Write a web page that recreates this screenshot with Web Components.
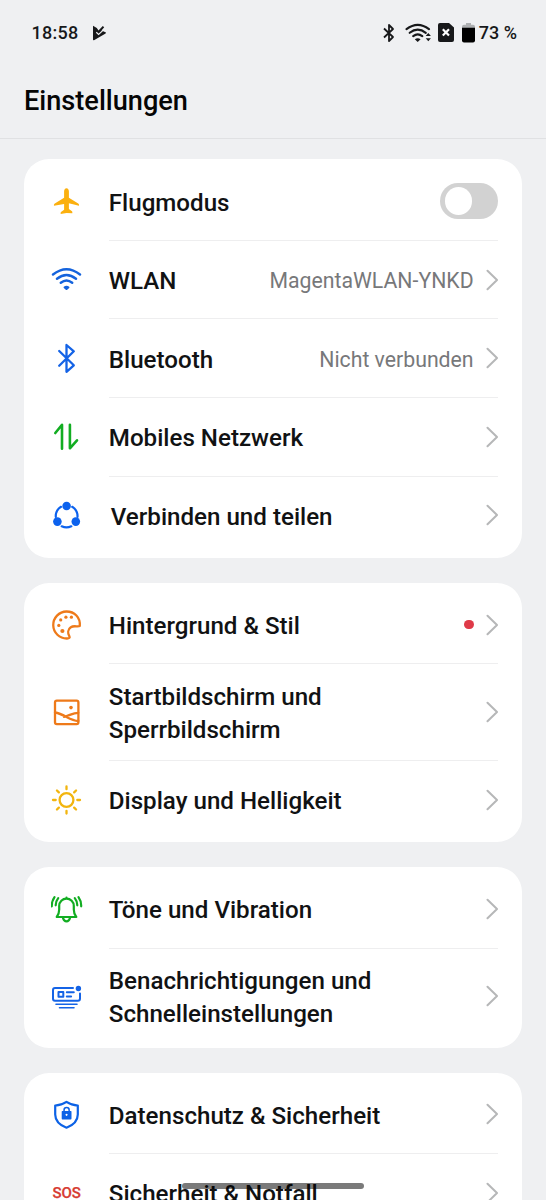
<!DOCTYPE html>
<html lang="de">
<head>
<meta charset="utf-8">
<title>Einstellungen</title>
<style>
html, body { margin: 0; height: 1200px; overflow: hidden; background: #eff0f2; }
</style>
</head>
<body>
<settings-screen></settings-screen>
<script>
const line = (c, w = 2) => `fill="none" stroke="${c}" stroke-width="${w}" stroke-linecap="round" stroke-linejoin="round"`;
const ICONS = {
  plane: `<path fill="#fbb00f" d="M16 2.2c1.5 0 2.4 1.6 2.4 3.4v6.2l9.3 5.6c.8.5 1 1.2.8 2.3l-10.1-2.4v5.6l3.1 2.4c.4.4.5 1.1.3 2L16 26.9l-5.8 1.2c-.2-.9-.1-1.6.3-2l3.1-2.4v-5.6L3.500 19.700c-.2-1.100 0-1.800.8-2.300l9.300-5.600V5.600c0-1.800.900-3.400 2.400-3.400z"/>`,
  wifi: `<g ${line('#1463dd', 2.4)}><path d="M2.500 10.500Q16-.200 29.500 10.500M6.500 14.800Q16 7.200 25.500 14.800M10.300 18.700Q16 14.200 21.700 18.700"/></g><path fill="#1463dd" d="M13.300 22.800q2.700-2.300 5.400 0 .5.600 0 1.100l-2 1.800q-.7.600-1.400 0l-2-1.800q-.5-.500 0-1.100z"/>`,
  bluetooth: `<path ${line('#1463e6', 2.3)} d="M8.700 8 23.300 22.300 16 28.800V2L23.300 8.300 8.700 22.800"/>`,
  data: `<path ${line('#12ad22', 2.6)} d="M4.800 12 11.500 3.800V27.800M19.400 3.800V27.300L26.500 19.300"/>`,
  share: `<path ${line('#0c62ee', 2.2)} d="M5.300 17A11.200 11.200 0 0 1 10.500 6.800M21.700 6.800A11.200 11.200 0 0 1 27 17M11.200 26.300A11.200 11.200 0 0 0 20.800 26.300"/><g fill="#0c62ee"><circle cx="16.100" cy="6" r="4.300"/><circle cx="6.900" cy="21.600" r="4.300"/><circle cx="25.300" cy="21.600" r="4.300"/></g>`,
  palette: `<path ${line('#ee7a1a', 2.3)} d="M29.300 17C30 8.500 24 2.500 16 2.500A13.500 13.500 0 0 0 16.500 29.500C19 29.400 19.700 28.500 18.800 27.200C17 24 17.300 20.300 20.300 18.300C23.500 16 26.800 18.200 29.300 17Z"/><g fill="#ee7a1a"><circle cx="20.900" cy="8.200" r="1.600"/><circle cx="15.400" cy="8.200" r="1.600"/><circle cx="10.200" cy="10.900" r="1.600"/><circle cx="8.300" cy="16.400" r="1.600"/><circle cx="11.900" cy="22" r="2.100"/></g>`,
  picture: `<g ${line('#ee7a1a', 2.3)}><rect x="4.500" y="3.700" width="23.400" height="23.400" rx="1.800"/><path d="M4.500 15.500C14 17 19 23.500 27.800 24M13.500 19.800C18.500 19 22 15.800 27.800 15.800"/></g><circle cx="20.500" cy="10.600" r="1.800" fill="#ee7a1a"/>`,
  sun: `<g ${line('#f2b50f', 2.3)}><circle cx="16" cy="16" r="6.900"/><path d="M16 2.500v2.700M16 26.800v2.700M2.500 16h2.700M26.800 16h2.700M6.450 6.450l1.900 1.900M23.650 23.650l1.900 1.900M6.450 25.550l1.900-1.900M23.650 8.350l1.900-1.900"/></g>`,
  bell: `<g ${line('#12ad22', 2.2)}><path d="M16 4.500v1.200M6.200 24H25.800C24 21.800 23.300 19.500 23.300 16.500V13A7.300 7.300 0 0 0 8.700 13V16.500C8.700 19.500 8 21.800 6.200 24ZM12.500 25q.8 3.300 3.500 3.300t3.500-3.300"/><path d="M4 4.100Q1.100 8.200 1.300 13.300M7.700 5.100Q5.200 8.300 5.200 12.300M28 4.100Q30.900 8.200 30.700 13.300M24.300 5.100Q26.800 8.300 26.800 12.300"/></g>`,
  panel: `<g ${line('#1463e6', 2)}><path d="M22.500 7H4.500Q2.500 7 2.500 9V17.500Q2.500 19.700 4.500 19.700H27.400Q29.500 19.700 29.500 17.500V12.500"/><rect x="8" y="11" width="4.800" height="4.800"/><path d="M16.300 11.300h7M16.300 15.500h4.300"/><path d="M5.500 23.200H26.500M9 26.700H23.500" stroke-width="1.600"/></g><circle cx="27.900" cy="7.500" r="2.700" fill="#1463e6"/>`,
  shield: `<path ${line('#0c62e6', 2.2)} d="M16 2.900Q21 6.300 27.300 6.600V15.500Q27.200 24.500 16 28.700Q4.800 24.500 4.700 15.500V6.600Q11 6.300 16 2.900Z"/><path fill="#0c62e6" fill-rule="evenodd" d="M11.200 12.600q0-.700.7-.700h.9v-.900a3.300 3.300 0 0 1 6.600 0v.900h.9q.7 0 .7.700v7q0 .900-.8.900h-8.200q-.8 0-.8-.900zM14.300 11.900h3.600v-.900a1.800 1.800 0 0 0-3.600 0zM16 14.800a1 1 0 1 0 .1 0z"/>`
};

const element = (name, render) => customElements.define(name, class extends HTMLElement {
  connectedCallback() {
    if (this.shadowRoot) return;
    this.attachShadow({ mode: 'open' }).innerHTML = render(this);
  }
});

element('status-bar', () => `
<style>
:host { display: flex; align-items: center; height: 65px; padding: 0 29px 0 31.500px; box-sizing: border-box; font: 500 18px/22px Roboto, sans-serif; color: #17181a; }
svg { display: block; flex: none; }
.time { letter-spacing: .25px; padding-top: 1px; margin-right: 13.500px; }
.space { flex: 1; }
.pct { padding-top: 1px; margin-left: 3.500px; }
</style>
<span class="time">18:58</span>
<svg width="15" height="16" viewBox="0 0 15 16"><path fill="#17181a" d="M1 .8 4.800 3 6.500 5.500 10.800 1 12.200 2.300 9.500 5.400 14 7.500 13.600 8.600 2 15.200Q1 15.500 1 14.500Z"/><path d="M4.300 7.200 6.600 9.400 11.500 4.900" fill="none" stroke="#eff0f2" stroke-width="1.200"/></svg>
<span class="space"></span>
<svg width="12" height="20" viewBox="0 0 12 20"><path fill="none" stroke="#17181a" stroke-width="1.800" stroke-linejoin="round" d="M1 5.500 10 14 6 18V2L10 6 1 14.500"/></svg>
<svg style="margin-left:10px" width="27" height="20" viewBox="0 0 27 20"><g fill="none" stroke="#17181a" stroke-width="2.100" stroke-linecap="round"><path d="M1.500 6.200Q12.700-2.600 24 6.200M4.700 9.800Q12.700 3.500 20.800 9.800M8.200 13.200Q12.700 9.700 17.300 13.200"/></g><path fill="#17181a" d="M9.800 16.300q2.900-2.300 5.800 0L12.700 19zM20.700 13l2.600-3 2.600 3zM20.700 15.200h5.200L23.300 18.300z"/></svg>
<svg style="margin-left:6px" width="16" height="19" viewBox="0 0 16 19"><path fill="#17181a" d="M2 0H11L16 4.500V17q0 2-2 2H2q-2 0-2-2V2Q0 0 2 0Z"/><path d="M4.800 6.300 11 12.500M11 6.300 4.800 12.500" stroke="#fff" stroke-width="2.200"/></svg>
<svg style="margin-left:8px" width="13" height="20" viewBox="0 0 13 20"><path fill="#aeb0b2" d="M4 0h5v1.800h2q2 0 2 2V6H0V3.800q0-2 2-2h2z"/><path d="M0 4.800H13V17.500q0 2-2 2H2q-2 0-2-2z"/></svg>
<span class="pct">73 %</span>`);

element('screen-header', () => `
<style>
:host { display: flex; align-items: center; height: 74px; box-sizing: border-box; padding: 0 24px 2px; border-bottom: 1px solid #e0e1e3; }
h1 { margin: 0; font: 500 27.150px/32px Roboto, sans-serif; color: #050505; letter-spacing: 0; }
</style>
<h1><slot></slot></h1>`);

element('setting-card', () => `
<style>
:host { display: block; box-sizing: border-box; padding: 3px 0; border-radius: 25px; background: #fff; }
</style>
<slot></slot>`);

element('setting-icon', host => `
<style>
:host { display: flex; align-items: center; justify-content: center; width: 32px; height: 32px; flex: none; }
svg { display: block; }
span { font: 500 15px/18px Roboto, sans-serif; color: #d73b32; padding-bottom: 1.500px; -webkit-text-stroke: .25px #d73b32; }
</style>
${host.getAttribute('name') === 'sos' ? '<span>SOS</span>' : `<svg width="32" height="32" viewBox="0.5 0 32 32">${ICONS[host.getAttribute('name')]}</svg>`}`);

element('toggle-switch', () => `
<style>
:host { display: flex; align-items: center; box-sizing: border-box; width: 57.500px; height: 36.500px; padding-left: 4.500px; border-radius: 19px; background: #d2d2d2; }
i { width: 27.500px; height: 27.500px; border-radius: 50%; background: #fff; }
</style><i></i>`);

element('setting-row', host => `
<style>
:host { display: flex; height: 78.600px; padding-left: 26.700px; padding-right: 24px; align-items: center; box-sizing: border-box; font-family: Roboto, sans-serif; }
:host([tall]) { height: 96.500px; }
.main { display: flex; flex: 1; align-self: stretch; align-items: center; margin-left: 26.100px; padding-right: .4px; border-bottom: 1px solid #eeeeef; }
:host(:last-child) .main { border-bottom-color: transparent; }
.label { flex: 1; padding-top: 4.400px; font-size: 24.150px; line-height: 33.700px; font-weight: 500; color: #111213; white-space: nowrap; }
:host([toggle]) .label { padding-top: 5.400px; }
:host([inset]) .label { padding-left: 2px; }
.value { font-size: 21.250px; line-height: 28px; color: #77787a; padding-top: 3.400px; margin-right: 12px; white-space: nowrap; }
.dot { width: 9.500px; height: 9.500px; border-radius: 50%; background: #df3a48; margin-right: 12px; }
.chevron { display: block; flex: none; }
</style>
<setting-icon name="${host.getAttribute('icon')}"></setting-icon>
<div class="main">
  <span class="label"><slot></slot></span>
  ${host.hasAttribute('value') ? `<span class="value">${host.getAttribute('value')}</span>` : ''}
  ${host.hasAttribute('dot') ? '<span class="dot"></span>' : ''}
  ${host.hasAttribute('toggle') ? '<toggle-switch></toggle-switch>' : '<svg class="chevron" width="12" height="22" viewBox="0 0 12 22"><path d="M1.500 1.700 11 11 1.500 20.300" fill="none" stroke="#b6b7b8" stroke-width="2" stroke-linecap="round" stroke-linejoin="round"/></svg>'}
</div>`);

element('home-bar', () => `
<style>
:host { display: block; position: absolute; left: 182px; top: 1182.700px; width: 182px; height: 6.600px; border-radius: 4px; background: rgba(0,0,0,.52); }
</style>`);

element('settings-screen', () => `
<style>
:host { display: block; position: relative; width: 546px; height: 1200px; overflow: hidden; background: #eff0f2; }
main { display: flex; flex-direction: column; gap: 24.500px; padding: 20.300px 24px 0; }
</style>
<status-bar></status-bar>
<screen-header>Einstellungen</screen-header>
<main>
  <setting-card>
    <setting-row icon="plane" toggle>Flugmodus</setting-row>
    <setting-row icon="wifi" value="MagentaWLAN-YNKD">WLAN</setting-row>
    <setting-row icon="bluetooth" value="Nicht verbunden">Bluetooth</setting-row>
    <setting-row icon="data">Mobiles Netzwerk</setting-row>
    <setting-row icon="share" inset>Verbinden und teilen</setting-row>
  </setting-card>
  <setting-card>
    <setting-row icon="palette" dot>Hintergrund &amp; Stil</setting-row>
    <setting-row icon="picture" tall>Startbildschirm und<br>Sperrbildschirm</setting-row>
    <setting-row icon="sun">Display und Helligkeit</setting-row>
  </setting-card>
  <setting-card>
    <setting-row icon="bell">Töne und Vibration</setting-row>
    <setting-row icon="panel" tall>Benachrichtigungen und<br>Schnelleinstellungen</setting-row>
  </setting-card>
  <setting-card>
    <setting-row icon="shield">Datenschutz &amp; Sicherheit</setting-row>
    <setting-row icon="sos">Sicherheit &amp; Notfall</setting-row>
  </setting-card>
</main>
<home-bar></home-bar>`);
</script>
</body>
</html>
